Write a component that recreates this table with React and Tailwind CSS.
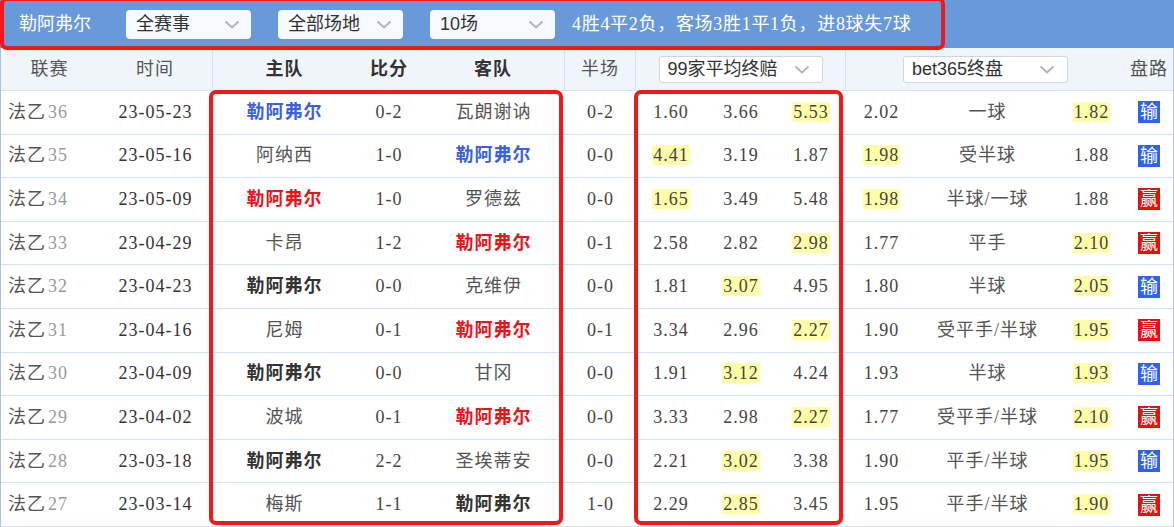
import React from "react";

const SERIF = { fontFamily: '"Liberation Serif", "Noto Sans CJK SC", serif' };
const SANS = { fontFamily: '"Liberation Sans", "Noto Sans CJK SC", sans-serif' };

const rows = [
  { n: 36, d: "23-05-23", h: "勒阿弗尔", s: "0-2", a: "瓦朗谢讷", t: "home", c: "blue", hf: "0-2", o: ["1.60", "3.66", "5.53"], oh: 2, b: ["2.02", "一球", "1.82"], bh: [2], r: "输" },
  { n: 35, d: "23-05-16", h: "阿纳西", s: "1-0", a: "勒阿弗尔", t: "away", c: "blue", hf: "0-0", o: ["4.41", "3.19", "1.87"], oh: 0, b: ["1.98", "受半球", "1.88"], bh: [0], r: "输" },
  { n: 34, d: "23-05-09", h: "勒阿弗尔", s: "1-0", a: "罗德兹", t: "home", c: "red", hf: "0-0", o: ["1.65", "3.49", "5.48"], oh: 0, b: ["1.98", "半球/一球", "1.88"], bh: [0], r: "赢" },
  { n: 33, d: "23-04-29", h: "卡昂", s: "1-2", a: "勒阿弗尔", t: "away", c: "red", hf: "0-1", o: ["2.58", "2.82", "2.98"], oh: 2, b: ["1.77", "平手", "2.10"], bh: [2], r: "赢" },
  { n: 32, d: "23-04-23", h: "勒阿弗尔", s: "0-0", a: "克维伊", t: "home", c: "dark", hf: "0-0", o: ["1.81", "3.07", "4.95"], oh: 1, b: ["1.80", "半球", "2.05"], bh: [2], r: "输" },
  { n: 31, d: "23-04-16", h: "尼姆", s: "0-1", a: "勒阿弗尔", t: "away", c: "red", hf: "0-1", o: ["3.34", "2.96", "2.27"], oh: 2, b: ["1.90", "受平手/半球", "1.95"], bh: [2], r: "赢" },
  { n: 30, d: "23-04-09", h: "勒阿弗尔", s: "0-0", a: "甘冈", t: "home", c: "dark", hf: "0-0", o: ["1.91", "3.12", "4.24"], oh: 1, b: ["1.93", "半球", "1.93"], bh: [2], r: "输" },
  { n: 29, d: "23-04-02", h: "波城", s: "0-1", a: "勒阿弗尔", t: "away", c: "red", hf: "0-0", o: ["3.33", "2.98", "2.27"], oh: 2, b: ["1.77", "受平手/半球", "2.10"], bh: [2], r: "赢" },
  { n: 28, d: "23-03-18", h: "勒阿弗尔", s: "2-2", a: "圣埃蒂安", t: "home", c: "dark", hf: "0-0", o: ["2.21", "3.02", "3.38"], oh: 1, b: ["1.90", "平手/半球", "1.95"], bh: [2], r: "输" },
  { n: 27, d: "23-03-14", h: "梅斯", s: "1-1", a: "勒阿弗尔", t: "away", c: "dark", hf: "1-0", o: ["2.29", "2.85", "3.45"], oh: 1, b: ["1.95", "平手/半球", "1.90"], bh: [2], r: "赢" },
];

const GRID = "grid grid-cols-[97px_115px_143px_66px_143px_71px_70px_70px_70px_71px_141px_67px_50px]";

function Chevron({ className = "" }) {
  return (
    <svg width="16" height="9" viewBox="0 0 16 9" className={className}>
      <polyline points="1.5,1.5 8,7.5 14.5,1.5" fill="none" stroke="#b4b4b4" strokeWidth="2" />
    </svg>
  );
}

function TopSelect({ label, w = "w-[125px]" }) {
  return (
    <div className={`${w} h-[29px] bg-[#f6f9fd] rounded-[4px] flex items-center justify-between pl-[10px] pr-[11px] text-[18px] text-[#333]`} style={SANS}>
      <span>{label}</span>
      <Chevron />
    </div>
  );
}

function Team({ name, hl, color }) {
  if (!hl) return <span className="text-[#555]">{name}</span>;
  const cls = color === "blue" ? "text-[#3b5fe0]" : color === "red" ? "text-[#e8141b]" : "text-[#333]";
  return <span className={`font-bold ${cls}`}>{name}</span>;
}

function Odd({ v, hl }) {
  return <span className={hl ? "bg-[#ffffaa] px-[1px]" : "px-[1px]"}>{v}</span>;
}

export default function App() {
  return (
    <div className="relative w-[1174px] h-[527px] overflow-hidden bg-white" style={SERIF}>
      {/* top bar */}
      <div className="h-[48px] bg-[#689ada] flex items-center">
        <div className="pl-[19px] w-[126px] text-[18px] text-white" style={SANS}>勒阿弗尔</div>
        <div className="flex items-center gap-[27px]">
          <TopSelect label="全赛事" />
          <TopSelect label="全部场地" />
          <TopSelect label="10场" />
        </div>
        <div className="ml-[17px] text-[18px] text-white tracking-[0.7px]" style={SERIF}>4胜4平2负，客场3胜1平1负，进8球失7球</div>
      </div>

      <div className="border-x border-[#a9c3e6]">
        {/* header */}
        <div className={`${GRID} h-[43px] bg-[#f0f5fb] border-b border-[#d5e1f0] items-center text-[18px] text-[#555] tracking-[1px]`}>
          <div className="text-center">联赛</div>
          <div className="text-center h-full flex items-center justify-center border-r border-[#d5e1f0]">时间</div>
          <div className="text-center font-bold text-[#333]">主队</div>
          <div className="text-center font-bold text-[#333]">比分</div>
          <div className="text-center font-bold text-[#333] h-full flex items-center justify-center border-r border-[#d5e1f0]">客队</div>
          <div className="text-center h-full flex items-center justify-center border-r border-[#d5e1f0]">半场</div>
          <div className="col-span-3 h-full flex items-center justify-center border-r border-[#d5e1f0]">
            <div className="w-[164px] h-[27px] bg-white border border-[#cfd6df] rounded-[3px] flex items-center justify-between pl-[8px] pr-[12px] text-[18px] text-[#333] tracking-normal" style={SANS}>
              <span>99家平均终赔</span>
              <Chevron />
            </div>
          </div>
          <div className="col-span-3 flex items-center justify-center">
            <div className="w-[165px] h-[27px] bg-white border border-[#cfd6df] rounded-[3px] flex items-center justify-between pl-[8px] pr-[12px] text-[18px] text-[#333] tracking-normal" style={SANS}>
              <span>bet365终盘</span>
              <Chevron />
            </div>
          </div>
          <div className="text-center pr-[2px]">盘路</div>
        </div>

        {/* rows */}
        {rows.map((r, i) => (
          <div key={i} className={`${GRID} h-[43.6px] border-b border-[#d5e1f0] items-center text-[18px] text-[#444] tracking-[1px]`}>
            <div className="pl-[7px] text-[#555]">
              法乙<span className="text-[#9a9a9a] ml-[2px]">{r.n}</span>
            </div>
            <div className="text-center text-[#333]">{r.d}</div>
            <div className="text-center"><Team name={r.h} hl={r.t === "home"} color={r.c} /></div>
            <div className="text-center text-[#444]">{r.s}</div>
            <div className="text-center"><Team name={r.a} hl={r.t === "away"} color={r.c} /></div>
            <div className="text-center text-[#444]">{r.hf}</div>
            {r.o.map((v, j) => (
              <div key={j} className="text-center"><Odd v={v} hl={r.oh === j} /></div>
            ))}
            <div className="text-center"><Odd v={r.b[0]} hl={r.bh.includes(0)} /></div>
            <div className="text-center text-[#555]">{r.b[1]}</div>
            <div className="text-center"><Odd v={r.b[2]} hl={r.bh.includes(2)} /></div>
            <div className="flex justify-center pr-[2px]">
              <span className={`w-[22px] h-[22px] flex items-center justify-center text-white text-[18px] leading-none tracking-normal ${r.r === "输" ? "bg-[#2f62ef]" : "bg-[#e80f0f]"}`}>{r.r}</span>
            </div>
          </div>
        ))}
      </div>

      {/* red highlight boxes */}
      <div className="absolute left-0 top-[-3px] w-[945px] h-[53px] border-[4px] border-[#f01818] rounded-[7px] pointer-events-none" />
      <div className="absolute left-[209px] top-[90px] w-[354px] h-[435px] border-[4px] border-[#f01818] rounded-[7px] pointer-events-none" />
      <div className="absolute left-[634px] top-[90px] w-[209px] h-[435px] border-[4px] border-[#f01818] rounded-[7px] pointer-events-none" />
    </div>
  );
}
